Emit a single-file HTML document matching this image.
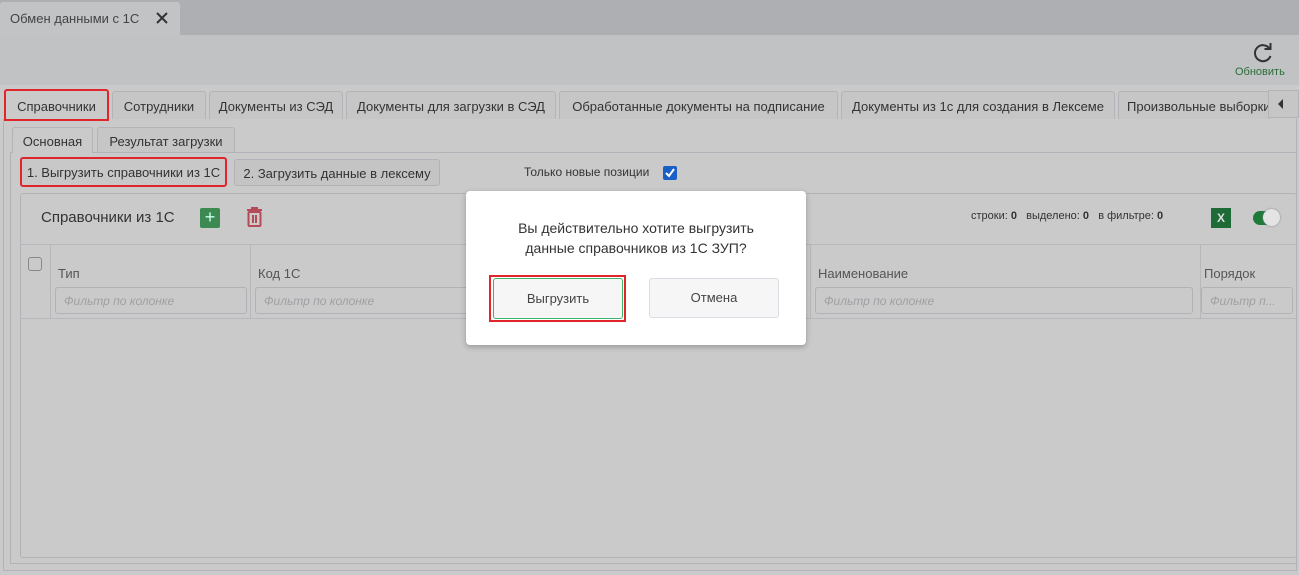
<!DOCTYPE html>
<html><head><meta charset="utf-8"><style>
*{box-sizing:border-box;margin:0;padding:0}
body{width:1299px;height:575px;overflow:hidden;background:#cacaca;font-family:"Liberation Sans","DejaVu Sans",sans-serif;color:#333;position:relative}
.a{position:absolute}
.tab{position:absolute;top:91px;height:28px;border:1px solid #b4b4b8;border-bottom:none;border-radius:3px 3px 0 0;background:#c6c6c6;font-size:13px;line-height:29px;text-align:center;color:#333;white-space:nowrap;overflow:hidden}
.btn{position:absolute;border:1px solid #b2b2b6;border-radius:3px;background:#c4c4c4;font-size:13px;text-align:center;color:#333}
.hdr{position:absolute;top:266px;font-size:13px;color:#555}
.flt{position:absolute;top:287px;height:27px;border:1px solid #b2b2b6;border-radius:3px;font-size:12px;font-style:italic;color:#a0a0a4;line-height:27px;padding-left:8px;white-space:nowrap;overflow:hidden}
</style></head><body>
<div class="a" style="left:0;top:0;width:1299px;height:35px;background:#adafb2"></div>
<div class="a" style="left:0;top:2px;width:180px;height:33px;background:#c1c3c5;border-radius:3px 3px 0 0;font-size:13px;line-height:33px;padding-left:10px;color:#444">Обмен данными с 1С</div>
<svg class="a" style="left:156px;top:12px" width="12" height="12"><path d="M1 1L11 11M11 1L1 11" stroke="#333" stroke-width="2"/></svg>
<div class="a" style="left:0;top:35px;width:1299px;height:50px;background:#c0c2c4"></div>
<svg class="a" style="left:1252px;top:42px" width="22" height="22" viewBox="0 0 22 22"><path d="M17.5 6.5A8 8 0 1 0 18.5 14" fill="none" stroke="#333" stroke-width="2"/><path d="M12.5 7H18.5V1" fill="none" stroke="#333" stroke-width="2"/></svg>
<div class="a" style="left:1235px;top:66px;font-size:11px;color:#2d6b3a">Обновить</div>

<div class="tab" style="left:4px;width:105px;border:2px solid #e0252b;background:#cacaca;line-height:32px;height:32px;top:89px">Справочники</div>
<div class="tab" style="left:112px;width:94px">Сотрудники</div>
<div class="tab" style="left:209px;width:134px">Документы из СЭД</div>
<div class="tab" style="left:346px;width:210px">Документы для загрузки в СЭД</div>
<div class="tab" style="left:559px;width:279px">Обработанные документы на подписание</div>
<div class="tab" style="left:841px;width:274px">Документы из 1с для создания в Лексеме</div>
<div class="tab" style="left:1118px;width:152px;text-align:left;padding-left:8px">Произвольные выборки</div>
<div class="a" style="left:1268px;top:90px;width:31px;height:28px;background:#c6c6c6;border:1px solid #b4b4b8"></div>
<svg class="a" style="left:1277px;top:99px" width="8" height="10"><path d="M6 0V10L1 5Z" fill="#333"/></svg>

<div class="a" style="left:3px;top:119px;width:1294px;height:452px;border:1px solid #b2b2b8;border-top:none"></div>
<div class="a" style="left:10px;top:152px;width:1287px;height:412px;border:1px solid #b2b2b8"></div>
<div class="tab" style="left:12px;top:127px;width:81px;height:26px;line-height:28px;background:#cacaca">Основная</div>
<div class="tab" style="left:97px;top:127px;width:138px;height:25px;line-height:28px">Результат загрузки</div>

<div class="btn" style="left:20px;top:157px;width:207px;height:30px;border:2px solid #e0252b;line-height:28px;background:#c8c8c8">1. Выгрузить справочники из 1С</div>
<div class="btn" style="left:234px;top:159px;width:206px;height:27px;line-height:28px">2. Загрузить данные в лексему</div>
<div class="a" style="left:524px;top:165px;font-size:12px;color:#333">Только новые позиции</div>
<div class="a" style="left:663px;top:166px;width:14px;height:14px;background:#1a5fc8;border-radius:2px"></div>
<svg class="a" style="left:663px;top:166px" width="14" height="14"><path d="M3 7L6 10L11 3" fill="none" stroke="#fff" stroke-width="2"/></svg>

<div class="a" style="left:20px;top:193px;width:1277px;height:365px;border:1px solid #b2b2b8;border-radius:3px"></div>
<div class="a" style="left:41px;top:209px;font-size:15px;color:#333">Справочники из 1С</div>
<div class="a" style="left:200px;top:208px;width:20px;height:20px;background:#3c8a52;border-radius:2px;color:#cfe;font-size:18px;line-height:19px;text-align:center">+</div>
<svg class="a" style="left:246px;top:207px" width="17" height="20" viewBox="0 0 17 20"><path d="M1 3H16M6 3V1H11V3" fill="none" stroke="#b64a58" stroke-width="2"/><rect x="2.5" y="5" width="12" height="14" rx="1" fill="none" stroke="#b64a58" stroke-width="2"/><path d="M7 8V16M10 8V16" stroke="#b64a58" stroke-width="2"/></svg>
<div class="a" style="left:971px;top:210px;font-size:11px;color:#333">строки: <b>0</b> &nbsp; выделено: <b>0</b> &nbsp; в фильтре: <b>0</b></div>
<div class="a" style="left:1211px;top:208px;width:20px;height:20px;background:#1f6b37;color:#ddd;font-size:12px;line-height:20px;text-align:center;font-weight:bold">X</div>
<div class="a" style="left:1253px;top:211px;width:26px;height:14px;background:#1f7a3a;border-radius:7px"></div>
<div class="a" style="left:1263px;top:209px;width:17px;height:17px;background:#e4e4e4;border-radius:50%;box-shadow:0 0 2px #888"></div>

<div class="a" style="left:21px;top:244px;width:1275px;height:1px;background:#b8b8bc"></div>
<div class="a" style="left:21px;top:318px;width:1275px;height:1px;background:#b8b8bc"></div>
<div class="a" style="left:50px;top:244px;width:1px;height:74px;background:#b8b8bc"></div>
<div class="a" style="left:250px;top:244px;width:1px;height:74px;background:#b8b8bc"></div>
<div class="a" style="left:810px;top:244px;width:1px;height:74px;background:#b8b8bc"></div>
<div class="a" style="left:1200px;top:244px;width:1px;height:74px;background:#b8b8bc"></div>
<div class="a" style="left:28px;top:257px;width:14px;height:14px;border:1px solid #888;border-radius:3px"></div>
<div class="hdr" style="left:58px">Тип</div>
<div class="hdr" style="left:258px">Код 1С</div>
<div class="hdr" style="left:818px">Наименование</div>
<div class="hdr" style="left:1204px">Порядок</div>
<div class="flt" style="left:55px;width:192px">Фильтр по колонке</div>
<div class="flt" style="left:255px;width:220px">Фильтр по колонке</div>
<div class="flt" style="left:815px;width:378px">Фильтр по колонке</div>
<div class="flt" style="left:1201px;width:92px">Фильтр п...</div>

<div class="a" style="left:466px;top:191px;width:340px;height:154px;background:#fff;border-radius:4px;box-shadow:0 2px 6px rgba(0,0,0,.25)"></div>
<div class="a" style="left:466px;top:218px;width:340px;text-align:center;font-size:14px;line-height:20px;color:#333">Вы действительно хотите выгрузить<br>данные справочников из 1С ЗУП?</div>
<div class="a" style="left:489px;top:275px;width:137px;height:47px;border:2px solid #e0252b"></div>
<div class="a" style="left:493px;top:278px;width:130px;height:41px;border:1px solid #3bb56a;border-radius:3px;background:#f6f6f6;font-size:13px;line-height:39px;text-align:center;color:#444">Выгрузить</div>
<div class="a" style="left:649px;top:278px;width:130px;height:40px;border:1px solid #dcdce4;border-radius:3px;background:#f6f6f6;font-size:13px;line-height:38px;text-align:center;color:#444">Отмена</div>
</body></html>
